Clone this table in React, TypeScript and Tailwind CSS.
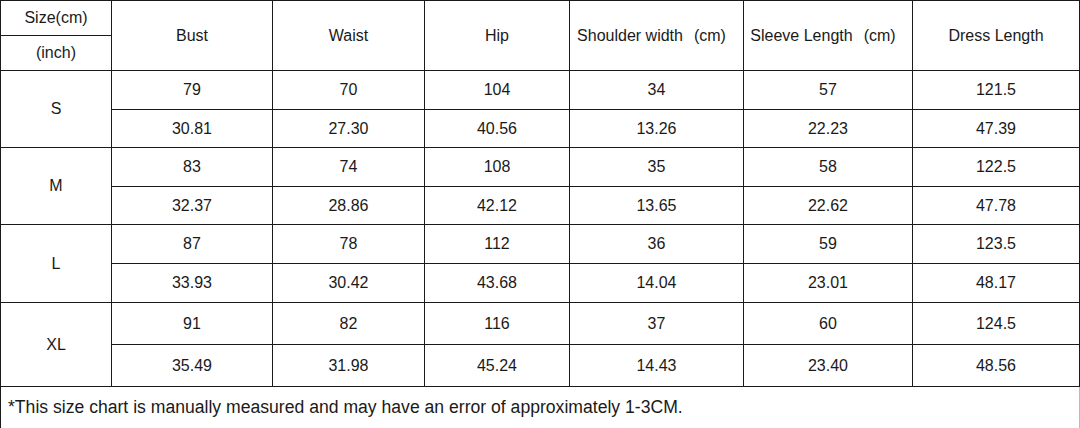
import React from "react";

const cols = [111, 161, 152, 145, 174, 169, 167];
const Paren = ({ label }: { label: string }) => (
  <span className="whitespace-nowrap">
    {label}
    <span className="ml-[11px] mr-[10px]">(cm)</span>
  </span>
);
const headers: { k: string; node: React.ReactNode }[] = [
  { k: "Bust", node: "Bust" },
  { k: "Waist", node: "Waist" },
  { k: "Hip", node: "Hip" },
  { k: "Shoulder", node: <Paren label="Shoulder width" /> },
  { k: "Sleeve", node: <Paren label="Sleeve Length" /> },
  { k: "Dress", node: "Dress Length" },
];
const data: { size: string; cm: string[]; inch: string[]; h: [number, number] }[] = [
  { size: "S", cm: ["79", "70", "104", "34", "57", "121.5"], inch: ["30.81", "27.30", "40.56", "13.26", "22.23", "47.39"], h: [39, 38] },
  { size: "M", cm: ["83", "74", "108", "35", "58", "122.5"], inch: ["32.37", "28.86", "42.12", "13.65", "22.62", "47.78"], h: [39, 38] },
  { size: "L", cm: ["87", "78", "112", "36", "59", "123.5"], inch: ["33.93", "30.42", "43.68", "14.04", "23.01", "48.17"], h: [39, 39] },
  { size: "XL", cm: ["91", "82", "116", "37", "60", "124.5"], inch: ["35.49", "31.98", "45.24", "14.43", "23.40", "48.56"], h: [42, 42] },
];

const cell = "border border-[#1a1a1a] text-center align-middle p-0";

export default function App() {
  return (
    <div className="w-[1080px] h-[428px] bg-white text-[#1a1a1a] text-[16px] leading-none" style={{ fontFamily: '"Liberation Sans", Arial, sans-serif' }}>
      <table className="border-collapse table-fixed w-[1079px]">
        <colgroup>
          {cols.map((w, i) => (
            <col key={i} style={{ width: w }} />
          ))}
        </colgroup>
        <tbody>
          <tr className="h-[35px]">
            <td className={cell}>Size(cm)</td>
            {headers.map((h) => (
              <td key={h.k} rowSpan={2} className={cell}>
                {h.node}
              </td>
            ))}
          </tr>
          <tr className="h-[35px]">
            <td className={cell}>(inch)</td>
          </tr>
          {data.map((r) => (
            <React.Fragment key={r.size}>
              <tr style={{ height: r.h[0] }}>
                <td rowSpan={2} className={cell}>
                  {r.size}
                </td>
                {r.cm.map((v, i) => (
                  <td key={i} className={cell}>
                    {v}
                  </td>
                ))}
              </tr>
              <tr style={{ height: r.h[1] }}>
                {r.inch.map((v, i) => (
                  <td key={i} className={cell}>
                    {v}
                  </td>
                ))}
              </tr>
            </React.Fragment>
          ))}
          <tr className="h-[42px]">
            <td colSpan={7} className="border border-[#1a1a1a] border-r-[#bbbbbb] border-b-[#bbbbbb] text-left align-middle pl-[7px] text-[17.6px]">
              *This size chart is manually measured and may have an error of approximately 1-3CM.
            </td>
          </tr>
        </tbody>
      </table>
    </div>
  );
}
